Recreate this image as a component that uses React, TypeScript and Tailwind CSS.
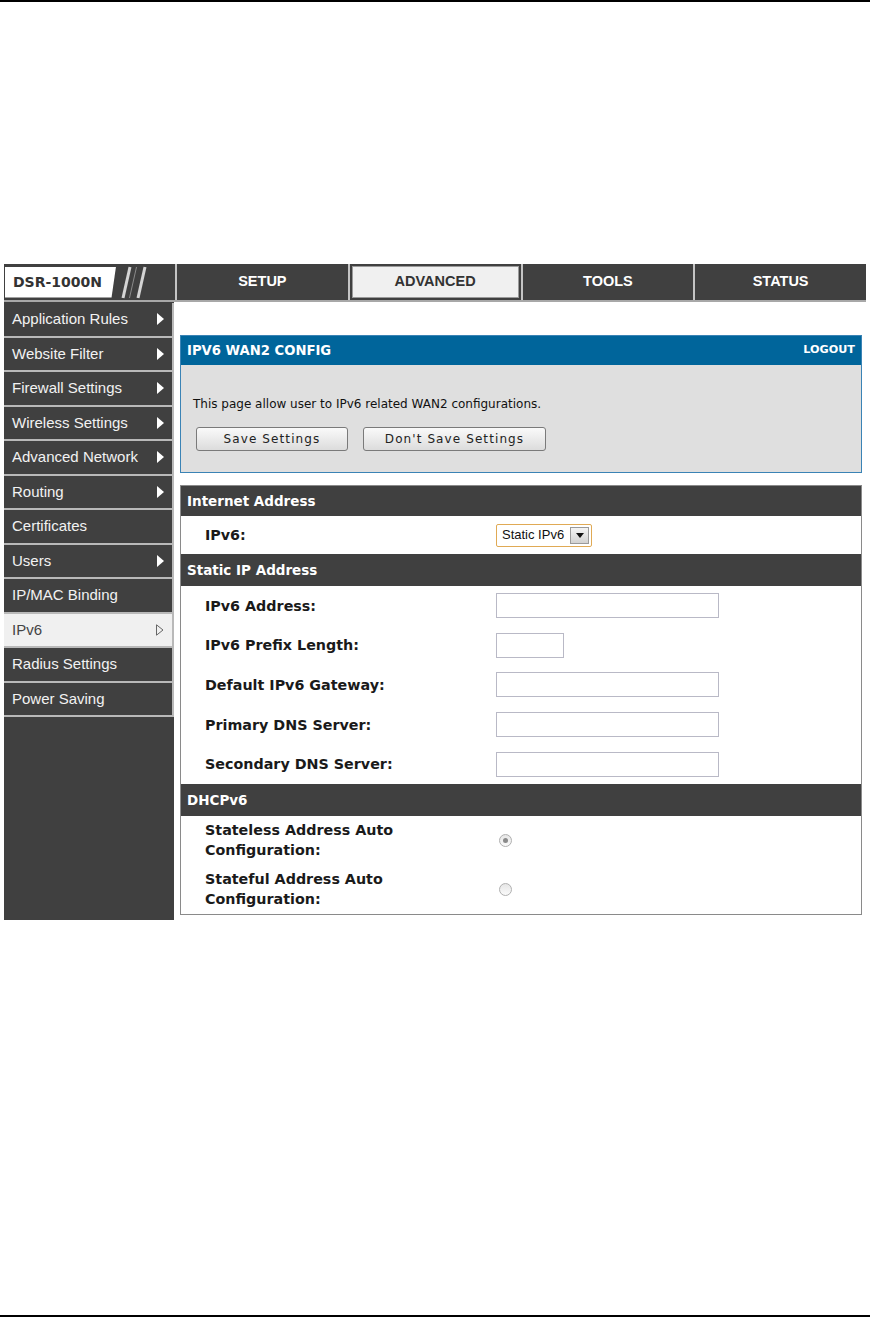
const tahoma = "font-['DejaVu_Sans',Verdana,sans-serif]"

type NavItem = { label: string; arrow?: boolean; active?: boolean }

const navItems: NavItem[] = [
  { label: 'Application Rules', arrow: true },
  { label: 'Website Filter', arrow: true },
  { label: 'Firewall Settings', arrow: true },
  { label: 'Wireless Settings', arrow: true },
  { label: 'Advanced Network', arrow: true },
  { label: 'Routing', arrow: true },
  { label: 'Certificates' },
  { label: 'Users', arrow: true },
  { label: 'IP/MAC Binding' },
  { label: 'IPv6', arrow: true, active: true },
  { label: 'Radius Settings' },
  { label: 'Power Saving' },
]

const tabs = ['SETUP', 'ADVANCED', 'TOOLS', 'STATUS']

function Logo() {
  return (
    <div className="flex h-full w-[171px] items-center bg-[#404040] pl-px">
      <div className="flex h-[31px] w-[111px] items-center bg-white pl-[8px] [clip-path:polygon(0_0,100%_0,96%_100%,0_100%)]">
        <span className="font-['DejaVu_Sans',Verdana,sans-serif] text-[14px] font-bold text-[#333]">DSR-1000N</span>
      </div>
      <svg width="32" height="33" viewBox="0 0 32 33" className="ml-[2px]">
        <line x1="12" y1="1" x2="5" y2="32" stroke="#d4d4d4" strokeWidth="3" />
        <line x1="27" y1="1" x2="20" y2="32" stroke="#d4d4d4" strokeWidth="3" />
        <line x1="18.5" y1="1" x2="11.5" y2="32" stroke="#8a8a8a" strokeWidth="1" />
      </svg>
    </div>
  )
}

function Header() {
  return (
    <div className="flex h-[36px] bg-[#404040]">
      <Logo />
      {tabs.map(t => {
        const active = t === 'ADVANCED'
        return (
          <div key={t} className="flex flex-1 border-l-2 border-[#c4c4c4]">
            <div
              className={
                active
                  ? 'm-[2px] flex flex-1 items-center justify-center border border-[#9a9a9a] bg-[#f0f0f0]'
                  : 'flex flex-1 items-center justify-center'
              }
            >
              <span
                className={
                  "font-['Liberation_Sans',Arial,sans-serif] text-[14.5px] font-bold " +
                  (active ? 'text-[#333]' : 'text-white')
                }
              >
                {t}
              </span>
            </div>
          </div>
        )
      })}
    </div>
  )
}

function Sidebar() {
  return (
    <div className="h-[618px] w-[170px] shrink-0 bg-[#404040] pt-px">
      {navItems.map(item => (
        <div
          key={item.label}
          className={
            'flex h-[34.5px] items-center justify-between border-r-2 border-b-2 border-[#b9b9b9] pl-[8px] pr-[8px] ' +
            (item.active ? 'bg-[#f0f0f0]' : 'bg-[#404040]')
          }
        >
          <span
            className={
              "font-['Liberation_Sans',Arial,sans-serif] text-[15px] " +
              (item.active ? 'text-[#444]' : 'text-[#f2f2f2]')
            }
          >
            {item.label}
          </span>
          {item.arrow &&
            (item.active ? (
              <svg width="8" height="12" viewBox="0 0 8 12">
                <path d="M0.5 0.8 L7 6 L0.5 11.2 Z" fill="none" stroke="#666" strokeWidth="1" />
              </svg>
            ) : (
              <svg width="7" height="12" viewBox="0 0 7 12">
                <path d="M0 0 L7 6 L0 12 Z" fill="#fff" />
              </svg>
            ))}
        </div>
      ))}
    </div>
  )
}

function Button({ children }: { children: string }) {
  return (
    <div
      className={
        tahoma +
        ' flex h-[24px] items-center justify-center rounded-[3px] border border-[#7a7a7a] bg-gradient-to-b from-[#fafafa] to-[#dcdcdc] text-[12px] tracking-[1.1px] text-[#222]'
      }
    >
      {children}
    </div>
  )
}

function Band({ title, h }: { title: string; h: string }) {
  return (
    <div className={h + ' flex items-center bg-[#404040] px-[6px]'}>
      <span className={tahoma + ' text-[13.5px] font-bold text-white'}>{title}</span>
    </div>
  )
}

function Row({ label, h, children }: { label: React.ReactNode; h: string; children?: React.ReactNode }) {
  return (
    <div className={h + ' flex items-center'}>
      <div className={tahoma + ' w-[315px] pl-[24px] text-[14.3px] font-bold leading-[20px] text-[#1a1a1a]'}>
        {label}
      </div>
      {children}
    </div>
  )
}

function TextInput({ w }: { w: string }) {
  return <div className={w + ' h-[25px] border border-[#b9b9c6] bg-white'} />
}

function Radio({ checked }: { checked?: boolean }) {
  return (
    <div className="ml-[3px] flex h-[13px] w-[13px] items-center justify-center rounded-full border border-[#b0b0b0] bg-gradient-to-b from-[#e6e6e6] to-[#fafafa]">
      {checked && <div className="h-[5px] w-[5px] rounded-full bg-[#8a8a8a]" />}
    </div>
  )
}

function SelectBox() {
  return (
    <div className="flex h-[23px] w-[96px] items-center justify-between rounded-[2px] border border-[#e0aa55] bg-white pl-[5px] pr-[2px]">
      <span className="font-['Liberation_Sans',Arial,sans-serif] text-[13px] text-[#111]">Static IPv6</span>
      <div className="flex h-[17px] w-[19px] items-center justify-center border border-[#9a9a9a] bg-gradient-to-b from-[#f4f4f4] to-[#d2d2d2]">
        <svg width="8" height="5" viewBox="0 0 8 5">
          <path d="M0 0 L8 0 L4 5 Z" fill="#111" />
        </svg>
      </div>
    </div>
  )
}

export default function App() {
  return (
    <div className="relative h-[1317px] w-[870px] overflow-hidden bg-white">
      <div className="h-[2px] bg-black" />

      <div className="mx-[4px] mt-[262px]">
        <Header />
        <div className="h-[2px] bg-[#a8a8a8]" />

        <div className="flex items-start">
          <Sidebar />

          <div className="flex-1 bg-white pl-[6px] pr-[4px] pt-[33px]">
            {/* config panel */}
            <div className="border border-[#3a83b5]">
              <div className="flex h-[29px] items-center justify-between bg-[#00659b] px-[6px]">
                <span className={tahoma + ' text-[13.2px] font-bold text-white'}>IPV6 WAN2 CONFIG</span>
                <span className={tahoma + ' text-[11.2px] font-bold text-white'}>LOGOUT</span>
              </div>
              <div className="h-[107px] bg-[#dfdfdf] pl-[12px] pt-[31px]">
                <p className={tahoma + ' text-[12px] leading-[16px] text-[#111]'}>
                  This page allow user to IPv6 related WAN2 configurations.
                </p>
                <div className="mt-[15px] flex gap-[15px] pl-[3px]">
                  <div className="w-[152px]">
                    <Button>Save Settings</Button>
                  </div>
                  <div className="w-[183px]">
                    <Button>Don't Save Settings</Button>
                  </div>
                </div>
              </div>
            </div>

            {/* settings table */}
            <div className="mt-[12px] border border-[#8a8a8a] bg-white">
              <Band title="Internet Address" h="h-[30px]" />
              <Row label="IPv6:" h="h-[38px]">
                <SelectBox />
              </Row>
              <Band title="Static IP Address" h="h-[32px]" />
              <Row label="IPv6 Address:" h="h-[39.6px]">
                <TextInput w="w-[223px]" />
              </Row>
              <Row label="IPv6 Prefix Length:" h="h-[39.6px]">
                <TextInput w="w-[68px]" />
              </Row>
              <Row label="Default IPv6 Gateway:" h="h-[39.6px]">
                <TextInput w="w-[223px]" />
              </Row>
              <Row label="Primary DNS Server:" h="h-[39.6px]">
                <TextInput w="w-[223px]" />
              </Row>
              <Row label="Secondary DNS Server:" h="h-[39.6px]">
                <TextInput w="w-[223px]" />
              </Row>
              <Band title="DHCPv6" h="h-[32px]" />
              <Row
                label={
                  <>
                    Stateless Address Auto
                    <br />
                    Configuration:
                  </>
                }
                h="h-[49px]"
              >
                <Radio checked />
              </Row>
              <Row
                label={
                  <>
                    Stateful Address Auto
                    <br />
                    Configuration:
                  </>
                }
                h="h-[49px]"
              >
                <Radio />
              </Row>
            </div>
          </div>
        </div>
      </div>

      <div className="absolute bottom-0 left-0 h-[2px] w-full bg-black" />
    </div>
  )
}
